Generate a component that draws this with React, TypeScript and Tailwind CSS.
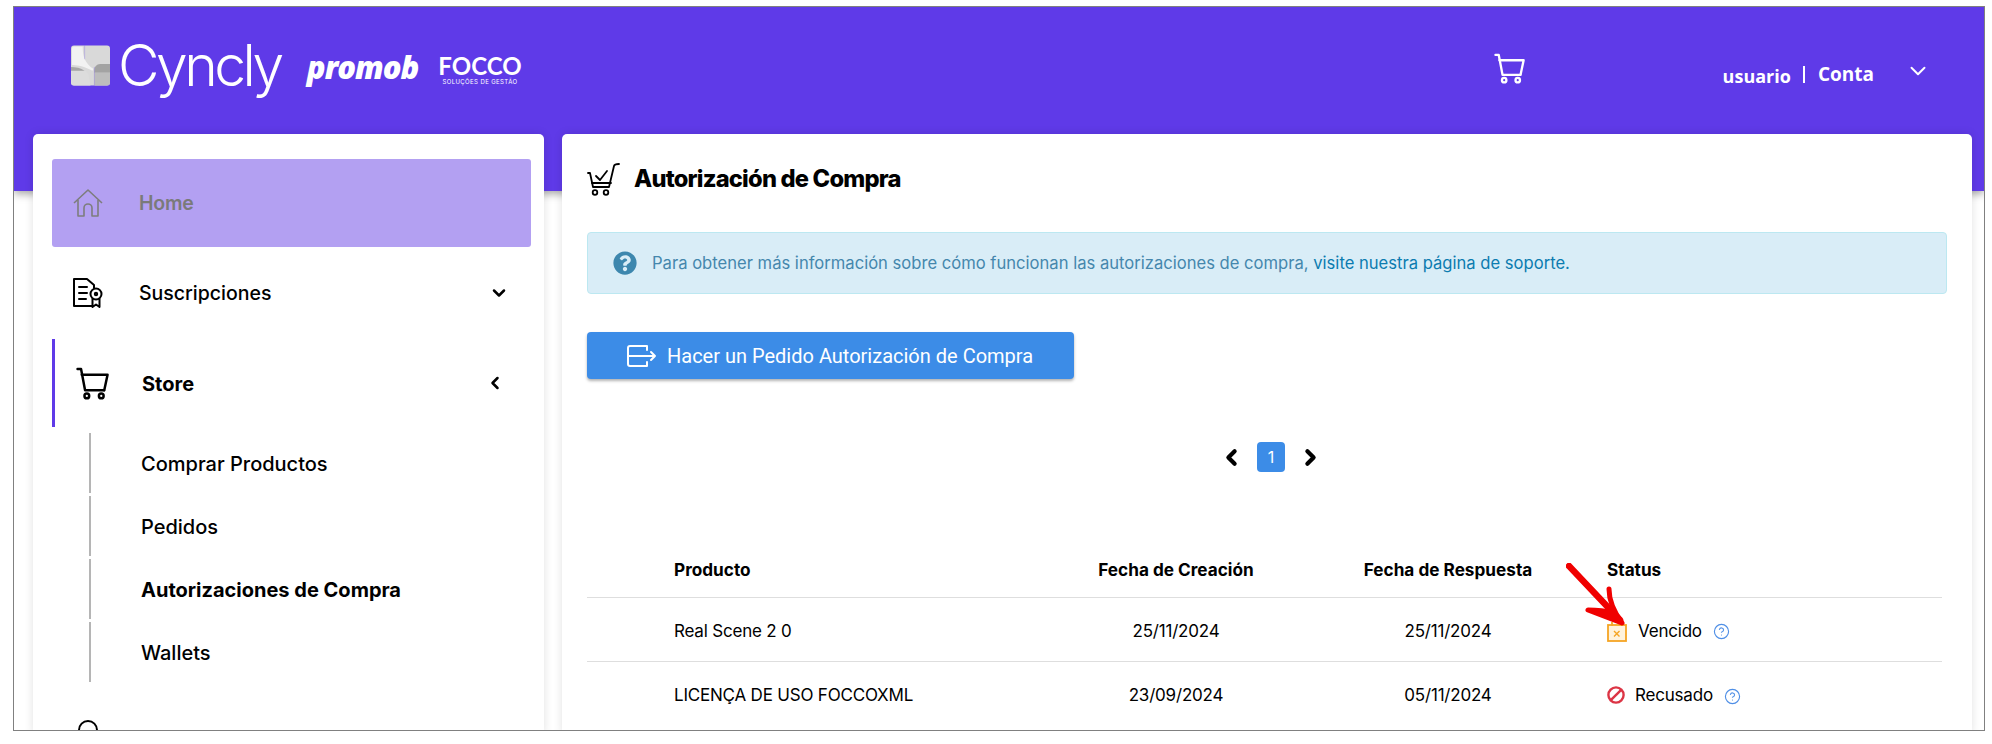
import { ChevronDown, ChevronLeft, ChevronRight, CircleHelp } from "lucide-react";
import { FaQuestionCircle } from "react-icons/fa";

const font = "font-['Inter','Liberation_Sans',sans-serif]";

function CartIcon({ className }: { className: string }) {
  return (
    <svg viewBox="0 0 32 32" fill="none" stroke="currentColor" strokeWidth="2.4" strokeLinecap="round" strokeLinejoin="round" className={className}>
      <path d="M1.5 2h3.4l3.9 20.5h18.4" />
      <path d="M5.6 7.5h25l-3.2 15" />
      <circle cx="10.5" cy="28" r="2.3" />
      <circle cx="24.5" cy="28" r="2.3" />
    </svg>
  );
}

function HomeIcon() {
  return (
    <svg viewBox="0 0 30 28" fill="none" stroke="currentColor" strokeWidth="1.6" strokeLinejoin="round" className="h-[28px] w-[30px] text-[#7d7d7d]">
      <path d="M1 14 15 1l14 13" />
      <path d="M5 11v16h6v-8a4 4 0 0 1 8 0v8h6V11" />
    </svg>
  );
}

function PolicyIcon() {
  return (
    <svg viewBox="0 0 30 30" fill="none" stroke="currentColor" strokeWidth="2" strokeLinecap="round" strokeLinejoin="round" className="h-[30px] w-[30px] text-black">
      <path d="M19 28H1V1h13l7 6v3" />
      <path d="M6 9h8M6 15h8M6 21h7" />
      <circle cx="23" cy="16" r="5.5" />
      <circle cx="23" cy="16" r="1.2" />
      <path d="M19.5 21v8l3.5-2.5 3.5 2.5v-8" />
    </svg>
  );
}

function CheckCartIcon() {
  return (
    <svg viewBox="0 0 33 33" fill="none" stroke="currentColor" strokeWidth="1.8" strokeLinecap="round" strokeLinejoin="round" className="h-[33px] w-[33px] text-black">
      <path d="M1 10h2l3 14h16l5-21q.5-2 5-2" />
      <path d="M9 13l4 4 7-9" />
      <path d="M5 20h19" />
      <circle cx="8" cy="29.5" r="2.3" />
      <circle cx="19" cy="29.5" r="2.3" />
    </svg>
  );
}

function LeaveIcon() {
  return (
    <svg viewBox="0 0 30 22" fill="none" stroke="currentColor" strokeWidth="2" strokeLinecap="round" strokeLinejoin="round" className="h-[22px] w-[30px] text-white">
      <path d="M20 5V1H3a2 2 0 0 0-2 2v16a2 2 0 0 0 2 2h17v-4" />
      <path d="M1 11h27M24 7l4 4-4 4" />
    </svg>
  );
}

function ExpiredIcon() {
  return (
    <svg viewBox="0 0 20 20" fill="#fff3dd" stroke="#f5a524" strokeWidth="1.8" className="h-[20px] w-[20px]">
      <rect x="1" y="3" width="18" height="16" />
      <path d="M5 0v4M15 0v4" />
      <path d="M7 9l5.5 5.5M12.5 9 7 14.5" strokeWidth="1.4" />
    </svg>
  );
}

function BanIcon() {
  return (
    <svg viewBox="0 0 18 18" fill="none" stroke="#dc3545" strokeWidth="2.4" className="mb-[3px] h-[18px] w-[18px]">
      <circle cx="9" cy="9" r="7.6" />
      <path d="M3.8 14.2 14.2 3.8" />
    </svg>
  );
}

function CynclyMark() {
  return (
    <svg viewBox="0 0 40 41" className="h-[41px] w-[39px] shrink-0">
      <rect width="40" height="41" rx="3" fill="#d9d9d9" />
      <path d="M1 3a2 2 0 0 1 2-2h9c0 10 2 17 11 23l-1 2c-8-5-18-6-21-6z" fill="#f2f2f2" />
      <path d="M0 22c7 0 15 2 18 8l2 11H3a3 3 0 0 1-3-3z" fill="#dcdcdc" />
      <path d="M0 22c5 0 10 1 14 4H0z" fill="#a5a5a5" />
      <path d="M24 26a6 6 0 0 1 6-7h10v9H24z" fill="#a3a3a3" />
      <path d="M24 28h16v10a3 3 0 0 1-3 3H24z" fill="#bdbdbd" />
      <path d="M14 0v14M24 41V22" stroke="#5f3ae8" strokeOpacity="0.25" />
    </svg>
  );
}

const subItems = [
  { label: "Comprar Productos", bold: false },
  { label: "Pedidos", bold: false },
  { label: "Autorizaciones de Compra", bold: true },
  { label: "Wallets", bold: false },
];

const rows = [
  { product: "Real Scene 2 0", created: "25/11/2024", answered: "25/11/2024", status: "Vencido" },
  { product: "LICENÇA DE USO FOCCOXML", created: "23/09/2024", answered: "05/11/2024", status: "Recusado" },
];

function Sidebar() {
  return (
    <aside className="h-[600px] w-[511px] shrink-0 rounded-t-[5px] bg-white pl-[19px] pr-[13px] pt-[25px] shadow-[0_0_10px_rgba(0,0,0,0.12)]">
      <div className="flex h-[88px] items-center rounded-[3px] bg-[#b3a0f2] pl-[21px]">
        <HomeIcon />
        <span className="ml-[36px] mt-[2px] text-[19.5px] font-semibold tracking-[-0.2px] text-[#7a7a7a]">Home</span>
      </div>
      <div className="mt-[2px] flex h-[88px] items-center pl-[21px] pr-[22px]">
        <PolicyIcon />
        <span className="ml-[36px] mt-[2px] flex-1 text-[19.5px] font-medium text-black">Suscripciones</span>
        <ChevronDown className="h-[20px] w-[20px] text-black" strokeWidth={3} />
      </div>
      <div className="mt-[2px] flex h-[88px] items-center border-l-[3px] border-[#5f3ae8] pl-[21px] pr-[26px]">
        <CartIcon className="h-[33px] w-[33px] text-black" />
        <span className="ml-[33px] mt-[2px] flex-1 text-[20px] font-bold text-black">Store</span>
        <ChevronLeft className="h-[20px] w-[20px] text-black" strokeWidth={3} />
      </div>
      <ul className="ml-[37px] mt-[6px] flex flex-col gap-[3px]">
        {subItems.map((item) => (
          <li key={item.label} className="flex h-[60px] items-center border-l-2 border-[#b5b5b5] pl-[50px]">
            <span className={`mt-[2px] text-[20px] text-black ${item.bold ? "font-bold" : "font-medium"}`}>{item.label}</span>
          </li>
        ))}
      </ul>
      <div className="ml-[26px] mt-[38px] h-[20px] w-[20px] rounded-full border-2 border-black" />
    </aside>
  );
}

function Orders() {
  return (
    <div className="mr-[5px] mt-[70px]">
      <div className="grid h-[56px] grid-cols-[386px_232px_312px_1fr] items-center border-b border-[#dedede] pl-[87px] text-[17.2px] font-bold text-black">
        <span>Producto</span>
        <span className="text-center">Fecha de Creación</span>
        <span className="text-center">Fecha de Respuesta</span>
        <span className="pl-[3px]">Status</span>
      </div>
      {rows.map((row, i) => (
        <div
          key={row.product}
          className={`grid h-[64px] grid-cols-[386px_232px_312px_1fr] items-center pl-[87px] pt-[4px] text-[17px] tracking-[-0.2px] text-black ${i === 0 ? "border-b border-[#dedede]" : ""}`}
        >
          <span>{row.product}</span>
          <span className="text-center">{row.created}</span>
          <span className="text-center">{row.answered}</span>
          <span className="flex items-center pl-[3px]">
            {row.status === "Vencido" ? <ExpiredIcon /> : <BanIcon />}
            <span className={row.status === "Vencido" ? "ml-[11px]" : "ml-[10px]"}>{row.status}</span>
            <CircleHelp className="ml-[11px] h-[17px] w-[17px] text-[#4f8fe6]" strokeWidth={1.6} />
          </span>
        </div>
      ))}
    </div>
  );
}

function Content() {
  return (
    <main className="h-[600px] flex-1 rounded-t-[5px] bg-white pl-[25px] pr-[25px] shadow-[0_0_10px_rgba(0,0,0,0.12)]">
      <div className="flex h-[90px] items-center">
        <CheckCartIcon />
        <h1 className="ml-[14px] text-[23.7px] font-extrabold tracking-[-0.8px] text-black">Autorización de Compra</h1>
      </div>
      <div className="mt-[8px] flex h-[62px] items-center rounded-[4px] border border-[#bce8f1] bg-[#d9edf7] pl-[25px] text-[16.6px] text-[#4587ad]">
        <FaQuestionCircle className="h-[24px] w-[24px] text-[#3d87ae]" />
        <p className="ml-[15px]">
          Para obtener más información sobre cómo funcionan las autorizaciones de compra,{" "}
          <span className="text-[#0c7cb0]">visite nuestra página de soporte.</span>
        </p>
      </div>
      <button className="mt-[38px] flex h-[47px] w-[487px] items-center rounded-[4px] bg-[#3c8ce7] pl-[40px] font-['Roboto',sans-serif] text-[20px] text-white shadow-[0_2px_3px_rgba(0,0,0,0.3)]">
        <LeaveIcon />
        <span className="ml-[10px]">Hacer un Pedido Autorización de Compra</span>
      </button>
      <div className="mt-[63px] flex items-center justify-center gap-[13px] pl-[8px]">
        <ChevronLeft className="h-[25px] w-[25px] text-black" strokeWidth={4} />
        <span className="flex h-[30px] w-[28px] items-center justify-center rounded-[4px] bg-[#3c8ce7] text-[16px] text-white">1</span>
        <ChevronRight className="h-[25px] w-[25px] text-black" strokeWidth={4} />
      </div>
      <Orders />
    </main>
  );
}

export default function App() {
  return (
    <div className={`h-[744px] overflow-hidden bg-white pb-[13px] pl-[13px] pr-[7px] pt-[6px] ${font}`}>
      <div className="relative h-full overflow-hidden border border-[#808080] bg-white">
        <header className="flex h-[184px] bg-[#5f3ae8] pl-[57px] pr-[53px] pt-[32px] text-white shadow-[0_3px_8px_rgba(0,0,0,0.35)]">
          <div className="flex h-[52px] items-center">
            <CynclyMark />
            <span className="ml-[8px] font-['Inter',sans-serif] text-[57px] font-light leading-none tracking-[-3.5px]">Cyncly</span>
            <span className="ml-[26px] mt-[4px] font-['Open_Sans',sans-serif] text-[31px] font-extrabold italic leading-none tracking-[-1px]">promob</span>
            <div className="ml-[20px] mt-[8px] flex flex-col items-center leading-none">
              <span className="font-['Lato',sans-serif] text-[24px] font-bold leading-none">FOCCO</span>
              <span className="mt-[1px] whitespace-nowrap text-[6px] tracking-[0.4px]">SOLUÇÕES DE GESTÃO</span>
            </div>
          </div>
          <div className="ml-auto flex h-[82px] items-center">
            <CartIcon className="mb-[24px] h-[31px] w-[31px]" />
            <span className="mb-[8px] ml-[198px] font-['Open_Sans',sans-serif] text-[18px] font-bold">usuario</span>
            <span className="mb-[12px] ml-[12px] h-[17px] w-[2px] bg-white" />
            <span className="mb-[12px] ml-[13px] font-['Open_Sans',sans-serif] text-[19px] font-bold">Conta</span>
            <ChevronDown className="mb-[18px] ml-[31px] h-[26px] w-[26px]" strokeWidth={1.8} />
          </div>
        </header>
        <div className="relative -mt-[57px] flex gap-[18px] pl-[19px] pr-[12px]">
          <Sidebar />
          <Content />
        </div>
        <svg viewBox="0 0 60 64" className="absolute left-[1552px] top-[556px] h-[64px] w-[60px]">
          <path d="M3 3 54 57" fill="none" stroke="#f00000" strokeWidth="6.5" strokeLinecap="round" />
          <path d="M43 26q0 16 13 34L22 47q14 0 26 3" fill="#f00000" stroke="#f00000" strokeWidth="5" strokeLinecap="round" strokeLinejoin="round" />
        </svg>
      </div>
    </div>
  );
}
